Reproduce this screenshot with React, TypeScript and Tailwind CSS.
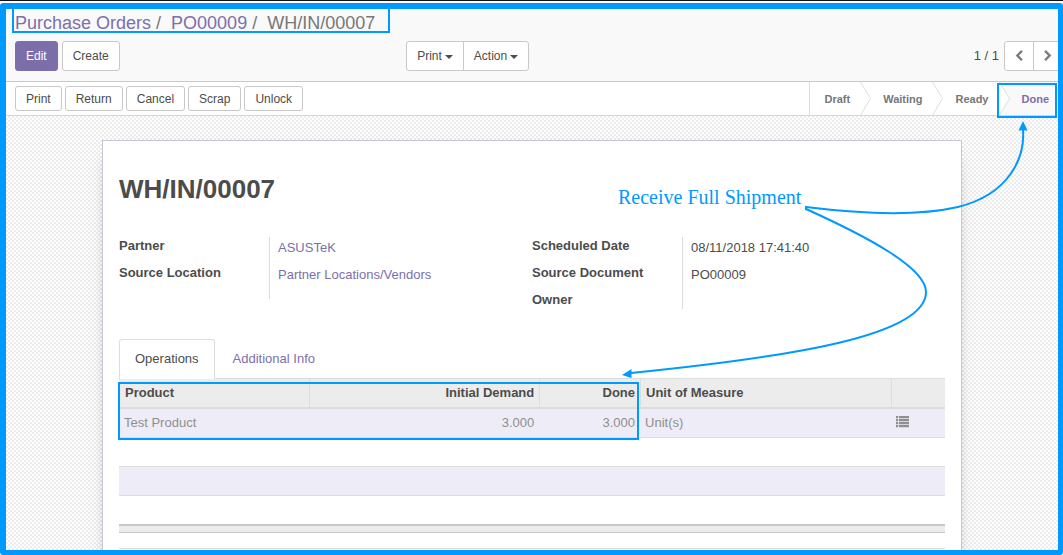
import type { ReactNode } from "react";

const toolButton =
  "rounded-[3px] border border-[#c8c8c8] bg-white px-[10px] text-[12px] text-[#4c4c4c]";

function Caret() {
  return (
    <svg viewBox="0 0 8 4" className="ml-[3px] inline-block h-1 w-2 fill-current" aria-hidden="true">
      <path d="M0 0h8L4 4z" />
    </svg>
  );
}

function Chevron({ direction }: { direction: "left" | "right" }) {
  return (
    <svg viewBox="0 0 1792 1792" className="h-3 w-3 fill-[#7c7c7c]" aria-hidden="true">
      {direction === "left" ? (
        <path d="M1427 301l-531 531 531 531q19 19 19 45t-19 45l-166 166q-19 19-45 19t-45-19l-742-742q-19-19-19-45t19-45l742-742q19-19 45-19t45 19l166 166q19 19 19 45t-19 45z" />
      ) : (
        <path d="M1363 877l-742 742q-19 19-45 19t-45-19l-166-166q-19-19-19-45t19-45l531-531-531-531q-19-19-19-45t19-45l166-166q19-19 45-19t45 19l742 742q19 19 19 45t-19 45z" />
      )}
    </svg>
  );
}

function StepArrow() {
  return (
    <svg viewBox="0 0 11 33" className="h-full w-[11px] fill-white stroke-[#dedede]" aria-hidden="true">
      <path d="M0.5 0L10.5 16.5L0.5 33" />
    </svg>
  );
}

function ListIcon() {
  return (
    <svg viewBox="0 0 13 12" className="h-3 w-[13px] fill-[#8f8f8f]" aria-hidden="true">
      {[0, 3, 6, 9].map((y) => (
        <path key={y} d={`M0 ${y}h2v2.200h-2zM2.800 ${y}h10.200v2.200h-10.200z`} />
      ))}
    </svg>
  );
}

function Field({ label, children }: { label: string; children?: ReactNode }) {
  return (
    <div className="flex h-[27px] leading-[18px]">
      <dt className="w-[150px] shrink-0 font-bold">{label}</dt>
      <dd className="pt-[2px] pl-[9px]">{children}</dd>
    </div>
  );
}

export default function App() {
  return (
    <div className="flex h-screen flex-col overflow-hidden border-t border-[#111] bg-white pt-[2px] font-['Liberation_Sans',Arial,sans-serif] text-[13px] text-[#4c4c4c]">
      <div className="relative flex min-h-0 flex-1 flex-col overflow-hidden rounded-[3px] border-[5px] border-t-[6px] border-l-[6px] border-[#0099ff]">
        <header className="h-[73px] shrink-0 border-b border-[#c8c8c8] bg-[#f9f9f9]">
          <nav
            aria-label="Breadcrumb"
            className="ml-[6px] h-6 w-[378px] border-2 border-t-0 border-[#0099ff] pl-[1px] text-[18px] leading-7 whitespace-pre text-[#777]"
          >
            <a href="#orders" className="text-[#7c6fad]">Purchase Orders</a>
            {" /  "}
            <a href="#po" className="text-[#7c6fad]">PO00009</a>
            {" /  WH/IN/00007"}
          </nav>
          <div className="mt-2 flex h-[30px] pl-[9px]">
            <div className="flex w-3/8 gap-1">
              <button className="rounded-[3px] border border-[#7c6fad] bg-[#7c6fa9] px-[10px] text-[12px] text-white">
                Edit
              </button>
              <button className={toolButton}>Create</button>
            </div>
            <div className="flex">
              <button className="rounded-l-[3px] border border-[#c8c8c8] bg-white px-[10px] text-[12px]">
                Print
                <Caret />
              </button>
              <button className="-ml-px rounded-r-[3px] border border-[#c8c8c8] bg-white px-[10px] text-[12px]">
                Action
                <Caret />
              </button>
            </div>
            <div className="-mr-[5px] ml-auto flex items-stretch">
              <span className="mr-[5px] self-center">1 / 1</span>
              <button aria-label="Previous" className="flex w-[30px] items-center justify-center rounded-l-[3px] border border-[#c8c8c8] bg-white">
                <Chevron direction="left" />
              </button>
              <button aria-label="Next" className="-ml-px flex w-[30px] items-center justify-center rounded-r-[3px] border border-[#c8c8c8] bg-white">
                <Chevron direction="right" />
              </button>
            </div>
          </div>
        </header>

        <div className="flex h-[34px] shrink-0 border-b border-[#d5d5d5] bg-white">
          <div className="flex flex-1 gap-[3px] pt-1 pb-1 pl-[9px]">
            {["Print", "Return", "Cancel", "Scrap", "Unlock"].map((name) => (
              <button key={name} className={toolButton}>{name}</button>
            ))}
          </div>
          <ol className="flex border-l border-[#dedede] text-[11px] leading-[34px] font-bold text-[#777]">
            <li className="flex">
              <span className="pr-[10px] pl-[14px]">Draft</span>
              <StepArrow />
            </li>
            <li className="flex">
              <span className="pr-[10px] pl-3">Waiting</span>
              <StepArrow />
            </li>
            <li className="flex">
              <span className="pr-[10px] pl-3">Ready</span>
            </li>
            <li aria-current="step" className="relative flex bg-[#f9f9f9] text-[#7c6fad]">
              <StepArrow />
              <span className="pr-[9px] pl-3">Done</span>
              <span className="absolute top-px right-px -left-[2px] h-[35px] border-2 border-[#0099ff]" />
            </li>
          </ol>
        </div>

        <main className="min-h-0 flex-1 overflow-hidden bg-[repeating-conic-gradient(#ececec_0_25%,#ffffff_0_50%)] bg-[length:4px_4px] px-4 pt-6">
          <article className="mx-auto min-h-[480px] max-w-[860px] border border-[#c8c8d3] bg-white px-4 shadow-[0_5px_20px_-15px_#000]">
            <h1 className="pt-8 text-[26px] leading-8 font-bold">WH/IN/00007</h1>
            <div className="mt-8 grid grid-cols-2">
              <dl className="h-[62px] bg-[linear-gradient(#dddddd,#dddddd)] bg-[length:1px_100%] bg-[position:150px_0] bg-no-repeat">
                <Field label="Partner">
                  <a href="#partner" className="text-[#7c6fad]">ASUSTeK</a>
                </Field>
                <Field label="Source Location">
                  <a href="#location" className="text-[#7c6fad]">Partner Locations/Vendors</a>
                </Field>
              </dl>
              <dl className="h-[72px] bg-[linear-gradient(#dddddd,#dddddd)] bg-[length:1px_100%] bg-[position:150px_0] bg-no-repeat">
                <Field label="Scheduled Date">08/11/2018 17:41:40</Field>
                <Field label="Source Document">PO00009</Field>
                <Field label="Owner" />
              </dl>
            </div>

            <div role="tablist" className="mt-[30px] flex h-10 border-b border-[#dddddd]">
              <button
                role="tab"
                aria-selected="true"
                className="-mb-px rounded-t-[3px] border border-b-0 border-[#dddddd] bg-white px-[15px] pb-[2px]"
              >
                Operations
              </button>
              <button role="tab" aria-selected="false" className="px-[18px] text-[#7c6fad]">
                Additional Info
              </button>
            </div>

            <div className="relative">
              <table className="w-full table-fixed border-separate border-spacing-0">
                <colgroup>
                  <col className="w-[23.1%]" />
                  <col className="w-[27.9%]" />
                  <col className="w-[12.2%]" />
                  <col className="w-[30.4%]" />
                  <col />
                </colgroup>
                <thead>
                  <tr className="h-[30px] bg-[#ececec] *:border-b-2 *:border-[#dddddd] *:font-bold">
                    <th className="border-r pl-[6px] text-left">Product</th>
                    <th className="border-r pr-[5px] text-right">Initial Demand</th>
                    <th className="border-r pr-[5px] text-right">Done</th>
                    <th className="border-r pl-[5px] text-left">Unit of Measure</th>
                    <th aria-label="Details" />
                  </tr>
                </thead>
                <tbody className="text-[#8f8f8f]">
                  <tr className="h-[29px] bg-[#eeecf7] *:border-b *:border-[#dddddd]">
                    <td className="pl-[5px]">Test Product</td>
                    <td className="pr-[6px] text-right">3.000</td>
                    <td className="pr-[6px] text-right">3.000</td>
                    <td className="pl-[4px]">Unit(s)</td>
                    <td className="pb-[2px] pl-[4px]">
                      <button aria-label="Detailed operations" className="block">
                        <ListIcon />
                      </button>
                    </td>
                  </tr>
                  <tr className="h-[29px]"><td colSpan={5} className="border-b border-[#dddddd]" /></tr>
                  <tr className="h-[29px] bg-[#eeecf7]"><td colSpan={5} className="border-b border-[#dddddd]" /></tr>
                  <tr className="h-[28px]"><td colSpan={5} /></tr>
                </tbody>
                <tfoot>
                  <tr className="h-[9px] bg-[#ececec]">
                    <td colSpan={5} className="border-t-2 border-b border-[#c8c8c8] p-0" />
                  </tr>
                </tfoot>
              </table>
              <span className="absolute top-[3px] -left-px h-[58px] w-[63.1%] border-2 border-[#0099ff]" />
            </div>
            <hr className="mt-[15px] border-[#dddddd]" />
          </article>
        </main>

        <div className="pointer-events-none absolute top-0 right-0 h-[380px] w-[452px] text-[#0099ff]">
          <p className="absolute top-[176px] left-[12px] font-['Liberation_Serif',serif] text-[20px] leading-6 whitespace-nowrap">
            Receive Full Shipment
          </p>
          <svg viewBox="606 9 452 380" className="h-full w-full fill-none stroke-current" aria-hidden="true">
            <path strokeWidth="2" d="M1023 130C1025 157 1010 194 958 207C923 215 870 215 806 207V209C868 237 926 268 926 292C926 336 790 357 631 373" />
            <path className="fill-current stroke-none" d="M1023 121l4.500 9.500h-9zM622 375l9.500-6v9z" />
          </svg>
        </div>
      </div>
    </div>
  );
}
